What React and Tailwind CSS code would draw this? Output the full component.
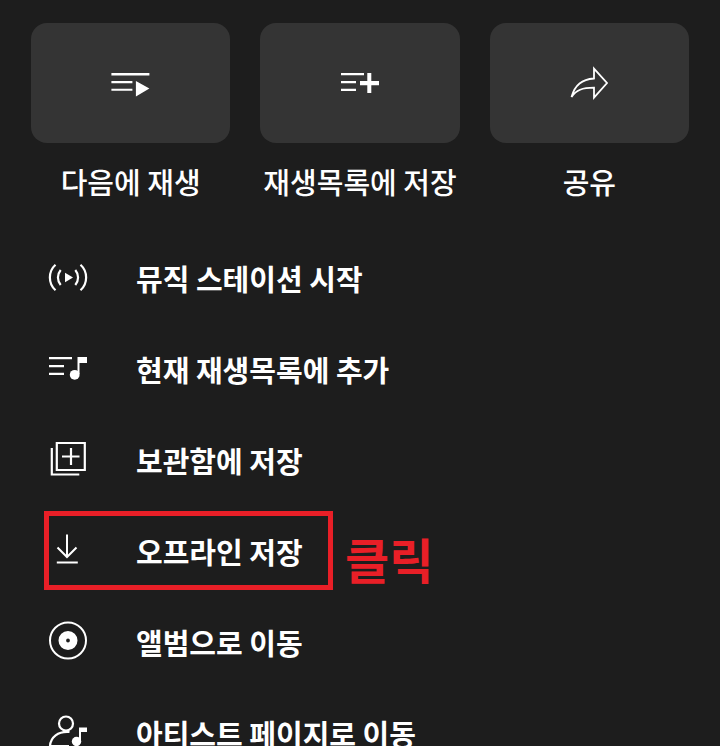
import React from "react";

const PlayNextIcon = () => (
  <svg className="size-10" viewBox="0 0 40 40" fill="currentColor" aria-hidden="true">
    <path d="M.4 10h38v2.400H.4zM.4 18h21v2.200H.4zM.4 25.800h21v2H.4zM24.900 18l13.500 7.500L24.900 33.500z" />
  </svg>
);

const PlaylistPlusIcon = () => (
  <svg className="size-10" viewBox="0 0 40 40" fill="currentColor" aria-hidden="true">
    <path d="M1 10h23v2.200H1zM1 18h15v2.200H1zM1 25.800h15v2.200H1zM20 18h7.300V10h4v8H39v4.200h-7.700v7.800h-4v-7.800H20z" />
  </svg>
);

const ShareIcon = () => (
  <svg className="size-10" viewBox="0 0 40 40" fill="none" stroke="currentColor" strokeWidth="1.8" aria-hidden="true">
    <path d="M25 5.700V15.500C13 16.500 6 21.500 2.500 34C7 27 13.500 24.700 25 24.700V34.600L38 20z" />
  </svg>
);

const StationIcon = () => (
  <svg className="size-10 shrink-0" viewBox="0 0 40 40" fill="none" stroke="currentColor" strokeWidth="2.200" aria-hidden="true">
    <path d="M7.500 7.700C0 14.500 0 26.500 7.500 33.300M32.500 7.700C40 14.500 40 26.500 32.500 33.300" />
    <path d="M12.700 13C9 17.500 9 23.500 12.700 28M27.300 13C31 17.500 31 23.500 27.300 28" />
    <path d="M17 15.800l8 4.700-8 4.700z" fill="currentColor" stroke="none" />
  </svg>
);

const QueueIcon = () => (
  <svg className="size-10 shrink-0" viewBox="0 0 40 40" fill="currentColor" aria-hidden="true">
    <path d="M1 9h23v2.200H1zM1 17h15v2.200H1zM1 24.800h15v2.200H1zM29.500 9H39v6h-7.500V26h-2z" />
    <circle cx="26.700" cy="26.800" r="4.900" />
  </svg>
);

const LibraryIcon = () => (
  <svg className="size-10 shrink-0" viewBox="0 0 40 40" fill="none" stroke="currentColor" strokeWidth="2.200" aria-hidden="true">
    <path d="M8.800 4h28v27h-28zM3.800 9v26.500h27.500M23 9v17M14 17.500h17.500" />
  </svg>
);

const DownloadIcon = () => (
  <svg className="size-10 shrink-0" viewBox="0 0 40 40" fill="none" stroke="currentColor" strokeWidth="2" aria-hidden="true">
    <path d="M19 4.500V27M9.500 17.500L19 27l9.500-9.500M8.800 32.500h21" />
  </svg>
);

const AlbumIcon = () => (
  <svg className="size-10 shrink-0" viewBox="0 0 40 40" fill="none" stroke="currentColor" strokeWidth="2" aria-hidden="true">
    <circle cx="20" cy="19.500" r="18" />
    <circle cx="20" cy="19.500" r="5.700" strokeWidth="7.600" />
  </svg>
);

const ArtistIcon = () => (
  <svg className="size-10 shrink-0" viewBox="0 0 40 40" fill="none" stroke="currentColor" strokeWidth="2.200" aria-hidden="true">
    <circle cx="18" cy="11.500" r="7" />
    <path d="M21.500 20C10 19 2.500 25.500 2 34h19" />
    <path d="M31 15.500h8V20h-6v10.500h-2z" fill="currentColor" stroke="none" />
    <circle cx="28.500" cy="29.500" r="4.700" fill="currentColor" stroke="none" />
  </svg>
);

const quickActions = [
  { label: "다음에 재생", icon: PlayNextIcon },
  { label: "재생목록에 저장", icon: PlaylistPlusIcon },
  { label: "공유", icon: ShareIcon },
];

const menuItems = [
  { label: "뮤직 스테이션 시작", icon: StationIcon },
  { label: "현재 재생목록에 추가", icon: QueueIcon },
  { label: "보관함에 저장", icon: LibraryIcon },
  { label: "오프라인 저장", icon: DownloadIcon, highlighted: true },
  { label: "앨범으로 이동", icon: AlbumIcon },
  { label: "아티스트 페이지로 이동", icon: ArtistIcon },
];

const App = () => {
  return (
    <main className="h-screen overflow-hidden bg-[#1d1d1d] text-white text-[29px] leading-10 font-medium font-['Noto_Sans_CJK_KR',sans-serif]">
      <div className="grid grid-cols-3 gap-[30px] px-[31px] pt-[23px]">
        {quickActions.map(({ label, icon: Icon }) => (
          <button key={label} type="button" className="flex flex-col items-center gap-[18px] whitespace-nowrap">
            <span className="flex h-[120px] w-full items-center justify-center rounded-2xl bg-[#343434]">
              <Icon />
            </span>
            <span>{label}</span>
          </button>
        ))}
      </div>

      <ul className="mt-[31px]">
        {menuItems.map(({ label, icon: Icon, highlighted }) => (
          <li key={label} className="relative">
            <button type="button" className="flex h-[91px] w-full items-center gap-12 pl-12 text-left font-bold whitespace-nowrap">
              <span className="mb-0.5">
                <Icon />
              </span>
              <span>{label}</span>
            </button>
            {/* callout drawn over the offline save row */}
            {highlighted && (
              <div className="pointer-events-none absolute top-1.5 left-11 flex items-center gap-3 text-[#e91f27]">
                <span className="h-[79px] w-[289px] border-5 border-current" />
                <strong className="pt-3.5 text-[48px] leading-none font-bold">클릭</strong>
              </div>
            )}
          </li>
        ))}
      </ul>
    </main>
  );
};

export default App;
